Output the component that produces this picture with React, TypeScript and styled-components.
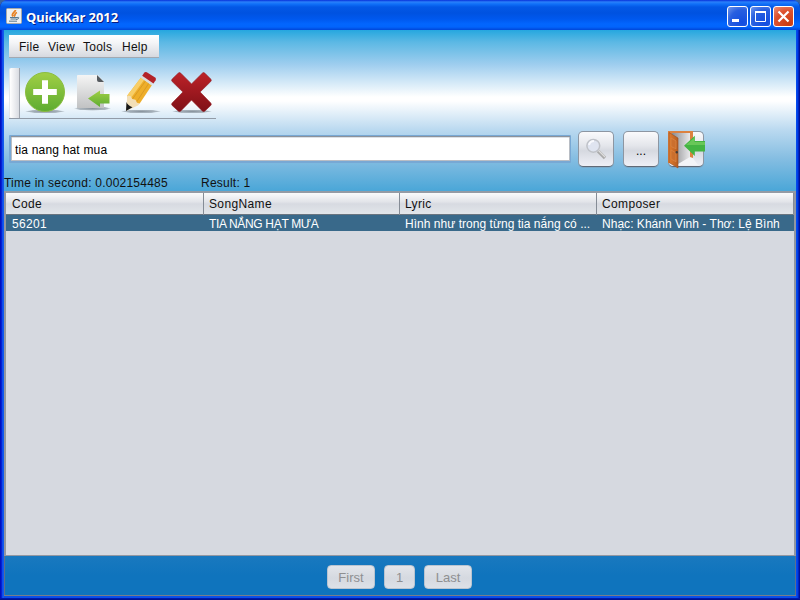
import React from "react";
import styled, { createGlobalStyle } from "styled-components";

const Global = createGlobalStyle`
  * { box-sizing: border-box; }
  body { margin: 0; overflow: hidden; background: #3a64a0; }
`;

const Frame = styled.div`
  width: 800px;
  height: 600px;
  display: flex;
  flex-direction: column;
  padding: 0 4px 4px;
  border-radius: 8px 8px 0 0;
  background: linear-gradient(90deg, #0010b8 0, #0010c8 1px, #0833e0 2px, #1763f5 3px, #0a50e8 4px, #0a50e8 796px, #0046f0 797px, #0038e0 798px, #0014a0 799px, #000e90 800px);
  box-shadow: inset 0 -1px #00138c, inset 0 -2px #0018ac;
  font-family: "Liberation Sans", Arial, sans-serif;
  font-size: 12px;
  color: #111;
`;

const TitleBar = styled.header`
  height: 30px;
  margin: 0 -4px;
  padding: 2px 6px 0 6px;
  display: flex;
  align-items: center;
  border-radius: 8px 8px 0 0;
  background: linear-gradient(#0831d9 0, #2a80fa 2px, #1070f8 4px, #0358e6 7px, #0052e0 13px, #0058ee 19px, #0266fe 24px, #0264fc 27px, #0046d8 30px);
`;

const Title = styled.h1`
  margin: 1px auto 0 4px;
  font: bold 13px/18px "Noto Sans", "Open Sans", sans-serif;
  letter-spacing: -0.05px;
  color: #fff;
  text-shadow: 1px 1px #0a1c80;
`;

const WindowButton = styled.button<{ $close?: boolean }>`
  width: 21px;
  height: 21px;
  margin-left: 2px;
  padding: 0;
  border: 1px solid #fff;
  border-radius: 3px;
  display: grid;
  place-items: center;
  background: ${(p) =>
    p.$close
      ? "radial-gradient(circle at 75% 90%, #cc3c10, #dd512e 60%, #ed9078)"
      : "radial-gradient(circle at 75% 80%, #124de0, #285fe0 60%, #7398ec)"};
`;

const Content = styled.main`
  height: 566px;
  display: flex;
  flex-direction: column;
  border-bottom: 1px solid #777d88;
  background: linear-gradient(#25a7df 0, #5bb8e4 12px, #9dcdee 34px, #fff 67px, #fff 71px, #bad9f0 100px, #86bee2 128px, #4ca7d8 160px, #1a79bf 525px, #0f74bd 545px);
`;

const MenuBar = styled.nav`
  width: 150px;
  height: 23px;
  margin: 5px 0 0 5px;
  padding: 1px 0 0 10px;
  display: flex;
  align-items: center;
  gap: 9px;
  border-bottom: 1px solid #a2a9b2;
  background: linear-gradient(#fff, #f4f5f7 35%, #d6d9df);
`;

const MenuItem = styled.span<{ $w: number }>`
  width: ${(p) => p.$w}px;
  white-space: nowrap;
  letter-spacing: 0.25px;
`;

const ToolBar = styled.div`
  width: 207px;
  height: 51px;
  margin: 10px 0 0 5px;
  display: flex;
  border-bottom: 1px solid #929ba7;
`;

const Grip = styled.div`
  width: 11px;
  height: 50px;
  border-right: 1px solid #9fa5ae;
  border-left: 1px solid #e3e7ec;
  border-radius: 2px 0 0 2px;
  background: linear-gradient(90deg, #fff, #d9dce2);
`;

const ToolIcon = styled.svg`
  width: 49px;
  height: 50px;
  flex: none;
`;

const SearchRow = styled.div`
  height: 38px;
  margin: 11px 0 0 5px;
  display: flex;
  align-items: center;
`;

const Field = styled.input`
  width: 562px;
  height: 28px;
  padding: 2px 4px 0;
  border: 2px solid #78a8d4;
  border-width: 1px 1px 2px 2px;
  border-radius: 1px;
  background: #fff;
  box-shadow: inset 0 1px #8c929b, inset 1px 0 #b8bdc4, inset -1px 0 #b8bdc4, inset 0 -1px #b9bdc4, inset 0 2px #dce1e6;
  font: 12px "Liberation Sans", Arial, sans-serif;
  letter-spacing: 0.18px;
  color: #000;
  outline: 0;
`;

const IconButton = styled.button`
  width: 36px;
  height: 36px;
  margin-left: 9px;
  padding: 0;
  display: grid;
  place-items: center;
  border: 1px solid #8d96a2;
  border-bottom-color: #606a77;
  border-radius: 5px;
  background: linear-gradient(#fafafc, #e4e6eb 40%, #d6d9e0 55%, #eef0f6);
  box-shadow: 0 1px #79a9c8;
  font: 12px "Liberation Sans", Arial, sans-serif;

  &:first-of-type { margin-left: 7px; }
  svg { margin: -1px; overflow: visible; }
`;

const Dots = styled.span`
  padding-top: 3px;
`;

const Status = styled.div`
  height: 23px;
  display: grid;
  grid-template-columns: 197px 1fr;
  padding-top: 8px;
  line-height: 14px;
  letter-spacing: 0.23px;
`;

const TablePane = styled.section`
  height: 365px;
  display: flex;
  flex-direction: column;
  border: solid #9297a1;
  border-width: 2px 2px 1px;
  border-top-color: #949ba5;
  background: #d6d9e0;
`;

const HeaderRow = styled.div`
  height: 22px;
  display: grid;
  grid-template-columns: 198px 196px 197px 1fr;
  border-bottom: 1px solid #6a7580;
  background: linear-gradient(#fafbfc, #e2e4e9 42%, #d7dae1 52%, #e2e6ea);
`;

const HeaderCell = styled.div`
  padding-left: 5px;
  line-height: 22px;
  border-right: 1px solid #858c96;
  letter-spacing: 0.36px;
  &:first-child { padding-left: 6px; }
`;

const DataRow = styled.div`
  height: 16px;
  display: grid;
  grid-template-columns: 198px 196px 197px 1fr;
  background: #39698a;
  color: #fff;
`;

const DataCell = styled.div<{ $spacing?: number }>`
  padding-left: 5px;
  line-height: 18px;
  white-space: nowrap;
  letter-spacing: ${(p) => p.$spacing ?? 0}px;
  &:first-child { padding-left: 6px; }
`;

const Pager = styled.footer`
  flex: 1;
  display: flex;
  align-items: flex-start;
  justify-content: center;
  gap: 9px;
  padding: 9px 1px 0 0;
  border: solid #5d6f8d;
  border-width: 0 1px;
`;

const PageButton = styled.button<{ $w: number }>`
  width: ${(p) => p.$w}px;
  height: 24px;
  padding: 1px 0 0;
  border: 1px solid #b9c4d0;
  border-radius: 4px;
  background: linear-gradient(#e2e5ea, #d5d9e0 55%, #dde1e7);
  color: #8e8f91;
  font: 13px "Liberation Sans", Arial, sans-serif;
`;

const JavaIcon = () => (
  <svg width="16" height="16" viewBox="0 0 16 16">
    <rect x=".5" y=".5" width="15" height="15" rx="1" fill="#edf0f1" stroke="#a9aaa9" />
    <path d="M9.5 2C9.5 4 4.5 5.5 7 8.5M11 4.5C8 5.5 10 6.5 8 8.5" fill="none" stroke="#e78326" strokeWidth="1.8" />
    <path d="M4 9.5h7M4.5 11h6M3 13.2h8M11 9.5q3-.6 1 1.5l-2 .5" fill="none" stroke="#58798f" />
  </svg>
);

const Defs = () => (
  <defs>
    <linearGradient id="green" x2="0" y2="1"><stop stopColor="#a1cf45" /><stop offset="1" stopColor="#5dac31" /></linearGradient>
    <linearGradient id="paper" x2="0" y2="1"><stop stopColor="#f5f5f5" /><stop offset="1" stopColor="#c1c2c3" /></linearGradient>
    <linearGradient id="red" x2="0" y2="1"><stop stopColor="#bd2228" /><stop offset="1" stopColor="#7f1017" /></linearGradient>
    <linearGradient id="wood"><stop stopColor="#df7b2c" /><stop offset="1" stopColor="#b65d20" /></linearGradient>
    <linearGradient id="gap"><stop stopColor="#858689" /><stop offset="1" stopColor="#eeeef0" /></linearGradient>
    <radialGradient id="shade"><stop stopColor="#55606a" stopOpacity=".65" /><stop offset=".8" stopColor="#65707a" stopOpacity=".45" /><stop offset="1" stopColor="#65707a" stopOpacity="0" /></radialGradient>
  </defs>
);

const AddIcon = () => (
  <ToolIcon viewBox="20 68 49 50">
    <Defs />
    <ellipse cx="45" cy="111.4" rx="20" ry="1.8" fill="url(#shade)" />
    <circle cx="45" cy="92" r="19.5" fill="url(#green)" stroke="#8bbd40" />
    <path d="M45 83.2v17.6M36.2 92h17.6" stroke="#fff" strokeWidth="6" strokeLinecap="square" />
  </ToolIcon>
);

const ImportIcon = () => (
  <ToolIcon viewBox="69 68 49 50">
    <ellipse cx="92.5" cy="108.5" rx="18.5" ry="2.2" fill="url(#shade)" />
    <path d="M77 76q0-1 1-1h20l6 7v26H77Z" fill="url(#paper)" />
    <path d="M97 75l7 7h-5q-2 0-2-2Z" fill="#555a5f" />
    <path d="M88 98.5l12-8v3.5h9.5v9.5H100v3.5Z" fill="url(#green)" />
  </ToolIcon>
);

const EditIcon = () => (
  <ToolIcon viewBox="118 68 49 50">
    <ellipse cx="141" cy="111.4" rx="20" ry="1.8" fill="url(#shade)" />
    <path d="M127.3 95.5L141 77.5l11 7.5-12.3 18.5-4.7 2-7-5Z" fill="#eeae2a" />
    <path d="M127.3 95.5L141 77.5l3.2 2.2L131 98Z" fill="#f8ce67" />
    <path d="M132.5 99L145.6 80.8M136.5 102L149 83" stroke="#d99b25" strokeWidth="1" />
    <path d="M127.3 95.5l3.4.7 1.6 2.8 3.2.8 1.5 3 2.7.7-1.7 1.9L126 111Z" fill="#f2dfb8" />
    <path d="M126.5 102q1.2 3.6 6 5.3L126 111Z" fill="#171717" />
    <path d="M140.8 77.8l1.7-2.8 11 7.4-1.8 3Z" fill="#dadcdd" />
    <path d="M142.2 75.8l2-3q1-1.2 2.6-.5l8.3 5.2q1.5 1.2.5 2.8l-2.1 3.1Z" fill="#b32228" />
  </ToolIcon>
);

const DeleteIcon = () => (
  <ToolIcon viewBox="167 68 49 50">
    <ellipse cx="192" cy="111.4" rx="20" ry="1.8" fill="url(#shade)" />
    <path d="M172.2 79l6-5.8q1.3-1.3 2.6 0L191.5 83.9l10.8-10.7q1.3-1.3 2.6 0l5.8 5.8q1.3 1.3 0 2.6L200.1 92l10.6 10.9q1.3 1.3 0 2.6l-5.8 5.4q-1.3 1.3-2.6 0L191.5 100.1 180.8 110.9q-1.3 1.3-2.6 0l-6-5.4q-1.3-1.3 0-2.6L182.9 92l-10.7-10.4q-1.3-1.3 0-2.6Z" fill="url(#red)" stroke="#8e151c" strokeWidth=".6" />
  </ToolIcon>
);

const SearchIcon = () => (
  <svg width="36" height="36">
    <path d="M20 20l7 7" stroke="#aaa" strokeWidth="3.2" />
    <path d="M20 19l7 7" stroke="#ddd" strokeWidth="1.3" />
    <circle cx="15.3" cy="14.8" r="6.4" fill="#dfe4f0" stroke="#bfc2c8" strokeWidth="1.5" />
    <path d="M11 14q1-4 5-4" fill="none" stroke="#f8f9fd" strokeWidth="2" />
  </svg>
);

const ExitIcon = () => (
  <svg width="36" height="36">
    <path d="M3 2h20v25l-9 6H9Z" fill="url(#gap)" />
    <path d="M10 33l12-7h2l6 8H10Z" fill="#f3f4f7" />
    <path d="M0 0h25v27l-3-1V2H4v30H0Z" fill="#dc8240" />
    <path d="M1 1.5L10 7v30L1 31.5Z" fill="url(#wood)" stroke="#9b4f20" strokeWidth=".6" />
    <path d="M3 7l5 2.8v8L3 15.5ZM3 19l5 2.8v9L3 28Z" fill="#cb6f2d" stroke="#de8a48" strokeWidth=".6" />
    <circle cx="8.8" cy="21.3" r="1.2" fill="#453c37" />
    <path d="M16 14.8L26.8 4.8V10H37v10.5H26.8V25Z" fill="#43b443" />
    <path d="M18 14l8.5-7.5V11H37v3Z" fill="#68c758" />
  </svg>
);

export default function App() {
  return (
    <>
      <Global />
      <Frame>
        <TitleBar>
          <JavaIcon />
          <Title>QuickKar 2012</Title>
          <WindowButton aria-label="Minimize"><svg width="19" height="19"><path d="M4 13.5h7" stroke="#fff" strokeWidth="3" /></svg></WindowButton>
          <WindowButton aria-label="Maximize"><svg width="19" height="19"><path d="M4.5 5v9.5h10V5M4 5.5h11" fill="none" stroke="#fff" /><path d="M4 5h11" stroke="#fff" strokeWidth="2" /></svg></WindowButton>
          <WindowButton $close aria-label="Close"><svg width="19" height="19"><path d="M4.5 4.5l10 10M14.5 4.5l-10 10" stroke="#fff" strokeWidth="2.2" /></svg></WindowButton>
        </TitleBar>
        <Content>
          <MenuBar>
            <MenuItem $w={20}>File</MenuItem>
            <MenuItem $w={26}>View</MenuItem>
            <MenuItem $w={30}>Tools</MenuItem>
            <MenuItem $w={26}>Help</MenuItem>
          </MenuBar>
          <ToolBar>
            <Grip />
            <AddIcon />
            <ImportIcon />
            <EditIcon />
            <DeleteIcon />
          </ToolBar>
          <SearchRow>
            <Field defaultValue="tia nang hat mua" />
            <IconButton aria-label="Search"><SearchIcon /></IconButton>
            <IconButton><Dots>...</Dots></IconButton>
            <IconButton aria-label="Exit"><ExitIcon /></IconButton>
          </SearchRow>
          <Status>
            <span>Time in second: 0.002154485</span>
            <span>Result: 1</span>
          </Status>
          <TablePane>
            <HeaderRow>
              <HeaderCell>Code</HeaderCell>
              <HeaderCell>SongName</HeaderCell>
              <HeaderCell>Lyric</HeaderCell>
              <HeaderCell>Composer</HeaderCell>
            </HeaderRow>
            <DataRow>
              <DataCell $spacing={0.3}>56201</DataCell>
              <DataCell $spacing={-0.33}>TIA NẮNG HẠT MƯA</DataCell>
              <DataCell $spacing={0.03}>Hình như trong từng tia nắng có ...</DataCell>
              <DataCell $spacing={0.03}>Nhạc: Khánh Vinh - Thơ: Lệ Bình</DataCell>
            </DataRow>
          </TablePane>
          <Pager>
            <PageButton $w={48}>First</PageButton>
            <PageButton $w={31}>1</PageButton>
            <PageButton $w={48}>Last</PageButton>
          </Pager>
        </Content>
      </Frame>
    </>
  );
}
